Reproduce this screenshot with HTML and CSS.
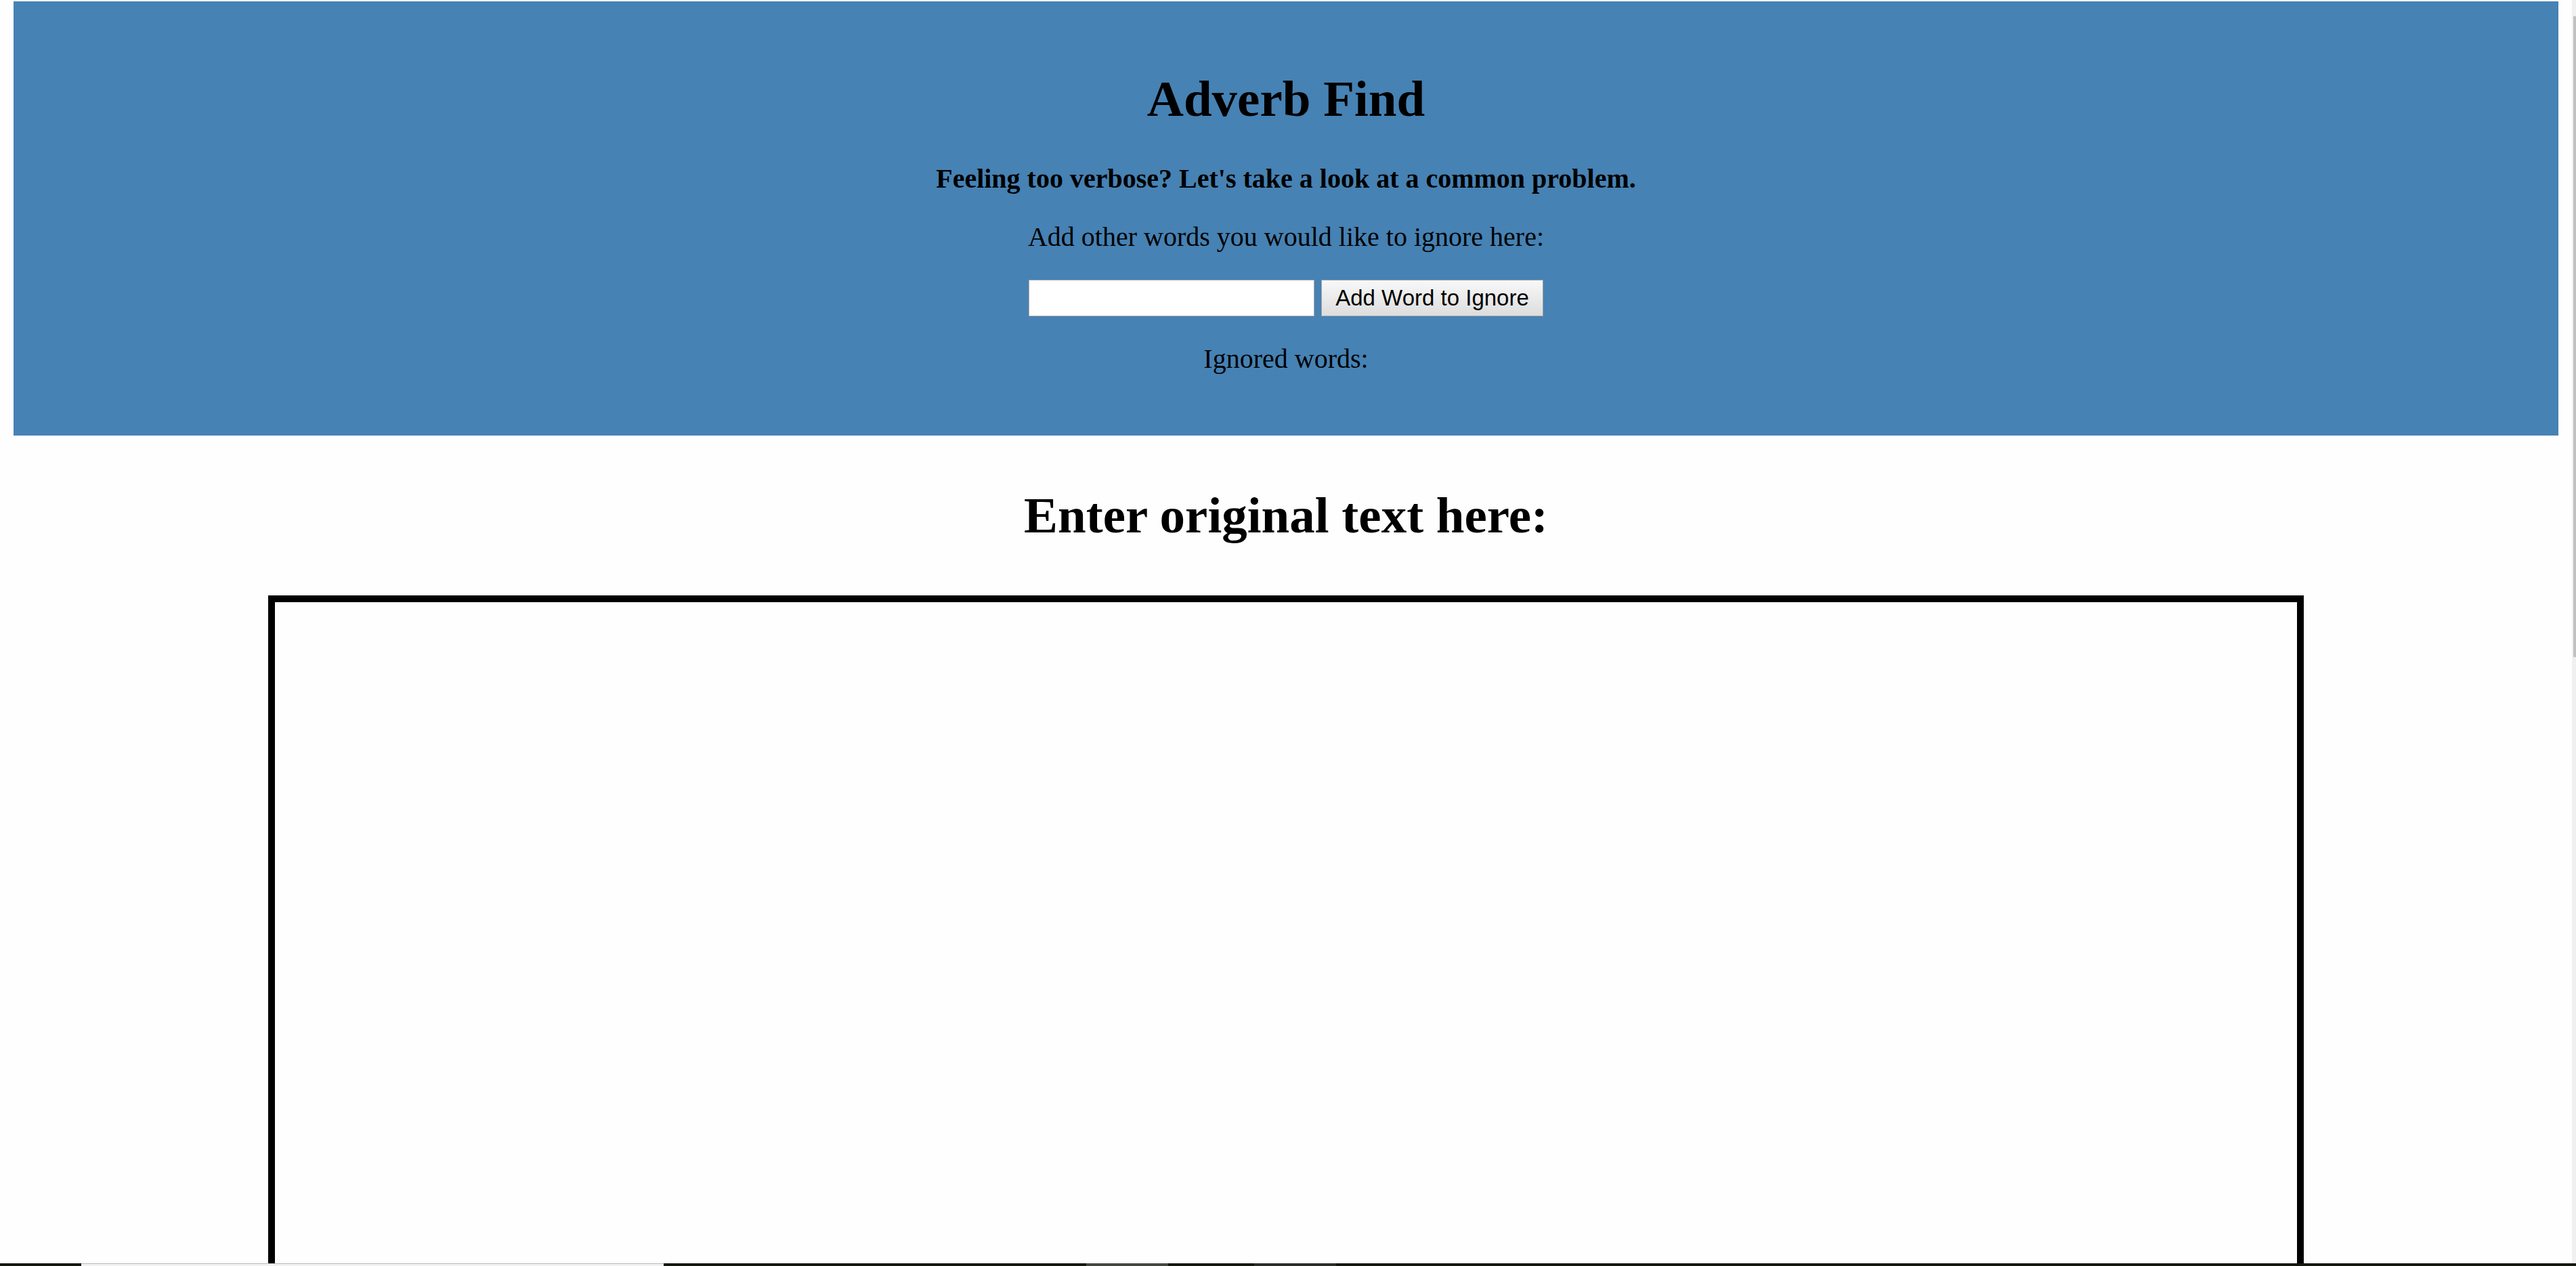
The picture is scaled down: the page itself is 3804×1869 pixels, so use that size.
FILE: index.html
```html
<!DOCTYPE html>
<html lang="en">
<head>
<meta charset="utf-8">
<title>Adverb Find</title>
<link rel="stylesheet" href="styles.css">
</head>
<body>
<div class="viewport">
  <main class="page">
    <header class="banner">
      <h1 class="title">Adverb Find</h1>
      <p class="tagline">Feeling too verbose? Let's take a look at a common problem.</p>
      <label class="hint" for="ignore-word">Add other words you would like to ignore here:</label>
      <form class="ignore-form">
        <input class="ignore-input" id="ignore-word" type="text">
        <button class="ignore-button" type="button">Add Word to Ignore</button>
      </form>
      <p class="ignored">Ignored words:</p>
    </header>
    <h1 class="title editor-title"><label for="original-text">Enter original text here:</label></h1>
    <textarea class="editor" id="original-text"></textarea>
  </main>
  <div class="scrollbar"><div class="thumb"></div></div>
</div>
<div class="taskbar">
  <span class="task-start"></span>
  <span class="task-search"></span>
  <span class="task-gap"></span>
  <span class="task-active"></span>
  <span class="task-between"></span>
  <span class="task-open"></span>
</div>
</body>
</html>
```
FILE: styles.css
```css
* {
  box-sizing: border-box;
}

body {
  margin: 0;
  height: 100vh;
  display: flex;
  flex-direction: column;
  overflow: hidden;
  background: #fefefe;
  color: #000;
  font: 40px/46px "Liberation Serif", "Times New Roman", serif;
}

.viewport {
  flex: 1;
  min-height: 0;
  display: flex;
  overflow: hidden;
}

.page {
  flex: 1;
  padding: 2px 20px 0;
}

.banner {
  display: flex;
  flex-direction: column;
  align-items: center;
  gap: 40px;
  padding: 101px 20px 90px;
  background: #4682b4;
  text-align: center;
}

.title {
  margin: 0;
  font-size: 75px;
  line-height: 86px;
  text-align: center;
}

.tagline,
.ignored {
  margin: 0;
}

.tagline {
  margin-top: 12px;
  font-weight: bold;
}

.ignore-form {
  display: flex;
  gap: 10px;
}

.ignore-input,
.ignore-button {
  height: 54px;
  font: 33px/38px "Liberation Sans", Arial, sans-serif;
}

.ignore-input {
  width: 422px;
  padding: 0 8px;
  border: 1px solid #a9a9a9;
  background: #fff;
}

.ignore-button {
  width: 328px;
  padding: 0;
  border: 1px solid #a0a0a0;
  border-radius: 0;
  background: linear-gradient(#f8f8f8, #dddddd);
  color: #000;
  white-space: nowrap;
}

.editor-title {
  margin: 75px 0;
}

.editor {
  display: block;
  width: 80%;
  height: 1250px;
  margin: 0 auto;
  padding: 20px;
  border: 10px solid #000;
  border-radius: 0;
  background: #fefefe;
  font: inherit;
  resize: none;
}

.scrollbar {
  width: 6px;
  padding: 24px 0 0 2px;
  background: #f0f0f0;
}

.thumb {
  height: 51.4%;
  background: #c1c1c1;
}

.taskbar {
  display: flex;
  height: 4px;
  background: #14180f;
}

.task-start {
  width: 120px;
}

.task-search {
  width: 860px;
  border-top: 1px solid #bbb;
  background: #f2f2f2;
}

.task-gap {
  width: 624px;
}

.task-active {
  width: 121px;
  background: #454840;
}

.task-between {
  width: 127px;
}

.task-open {
  width: 121px;
  background: #2b2e28;
}
```
